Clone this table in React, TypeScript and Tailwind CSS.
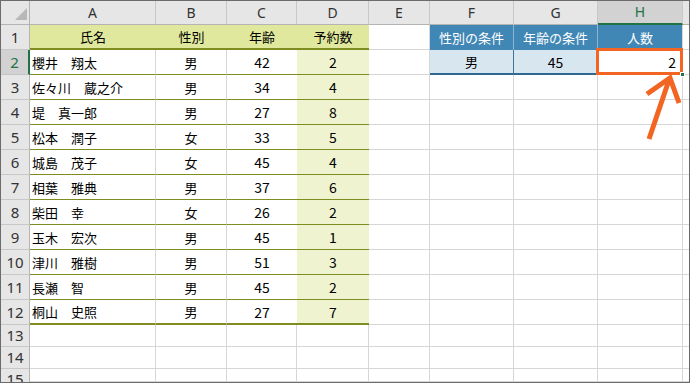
import React from "react";

type Row = { name: string; sex: string; age: string; n: string };

const data: Row[] = [
  { name: "櫻井　翔太", sex: "男", age: "42", n: "2" },
  { name: "佐々川　蔵之介", sex: "男", age: "34", n: "4" },
  { name: "堤　真一郎", sex: "男", age: "27", n: "8" },
  { name: "松本　潤子", sex: "女", age: "33", n: "5" },
  { name: "城島　茂子", sex: "女", age: "45", n: "4" },
  { name: "相葉　雅典", sex: "男", age: "37", n: "6" },
  { name: "柴田　幸", sex: "女", age: "26", n: "2" },
  { name: "玉木　宏次", sex: "男", age: "45", n: "1" },
  { name: "津川　雅樹", sex: "男", age: "51", n: "3" },
  { name: "長瀬　智", sex: "男", age: "45", n: "2" },
  { name: "桐山　史照", sex: "男", age: "27", n: "7" },
];

const letters = ["A", "B", "C", "D", "E", "F", "G"];

function RowHead({ label, selected, cut }: { label: string; selected?: boolean; cut?: boolean }) {
  if (selected) {
    return (
      <div className="flex items-center justify-center border-b border-r-2 border-b-[#c4c4c4] border-r-[#217346] bg-[#d2d2d2] font-['Noto_Sans','Liberation_Sans',sans-serif] text-[15px] text-[#217346]">
        {label}
      </div>
    );
  }
  if (cut) {
    return (
      <div className="flex items-start justify-center overflow-hidden border-r border-r-[#b4b4b4] bg-[#e6e6e6] pt-[3px] font-['Noto_Sans','Liberation_Sans',sans-serif] text-[15px] leading-[15px] text-[#333]">
        {label}
      </div>
    );
  }
  return (
    <div className="flex items-center justify-center border-b border-r border-b-[#c8c8c8] border-r-[#b4b4b4] bg-[#e6e6e6] font-['Noto_Sans','Liberation_Sans',sans-serif] text-[15px] text-[#333]">
      {label}
    </div>
  );
}

function Empty() {
  return <div className="border-b border-r border-[#d6d6d6] bg-white" />;
}

export default function App() {
  return (
    <div className="relative h-[383px] w-[690px] overflow-hidden border border-[#6b6b6b] bg-white font-['Noto_Sans_CJK_JP','Noto_Sans',sans-serif] text-[13px] leading-none text-black">
      <div className="grid h-full grid-cols-[29px_126px_71px_70px_72px_61px_84px_84px_85px_6px] grid-rows-[24px_repeat(12,25px)_22px_22px_13px]">
        {/* column header row */}
        <div className="relative border-b border-r border-b-[#b4b4b4] border-r-[#b4b4b4] bg-[#e6e6e6]">
          <svg className="absolute left-[14px] top-[7px]" width="12" height="12" viewBox="0 0 12 12">
            <polygon points="12,0 12,12 0,12" fill="#b8b8b8" />
          </svg>
        </div>
        {letters.map((l) => (
          <div
            key={l}
            className="flex items-center justify-center border-b border-r border-b-[#b4b4b4] border-r-[#c8c8c8] bg-[#e6e6e6] font-['Noto_Sans','Liberation_Sans',sans-serif] text-[14px] text-[#333]"
          >
            {l}
          </div>
        ))}
        <div className="flex items-center justify-center border-b-2 border-r border-b-[#217346] border-r-[#c8c8c8] bg-[#d2d2d2] font-['Noto_Sans','Liberation_Sans',sans-serif] text-[14px] text-[#217346]">
          H
        </div>
        <div className="border-b border-b-[#b4b4b4] bg-[#e6e6e6]" />

        {/* row 1 */}
        <RowHead label="1" />
        <div className="flex items-center justify-center border-b-2 border-[#7f8c1f] bg-[#dfe89c]">氏名</div>
        <div className="flex items-center justify-center border-b-2 border-[#7f8c1f] bg-[#dfe89c]">性別</div>
        <div className="flex items-center justify-center border-b-2 border-[#7f8c1f] bg-[#dfe89c]">年齢</div>
        <div className="flex items-center justify-center border-b-2 border-[#7f8c1f] bg-[#dfe89c]">予約数</div>
        <Empty />
        <div className="flex items-center justify-center border-r border-r-[#8db5d0] bg-[#4187b5] text-white">性別の条件</div>
        <div className="flex items-center justify-center border-r border-r-[#8db5d0] bg-[#4187b5] text-white">年齢の条件</div>
        <div className="flex items-center justify-center border-r border-r-[#d6d6d6] bg-[#4187b5] text-white">人数</div>
        <div className="border-b border-[#d6d6d6] bg-white" />

        {/* data rows */}
        {data.map((r, i) => {
          const last = i === data.length - 1;
          return (
            <React.Fragment key={i}>
              <RowHead label={String(i + 2)} selected={i === 0} />
              <div
                className={
                  last
                    ? "flex items-center border-b-2 border-r border-b-[#7f8c1f] border-r-[#d6d6d6] pl-[2px] whitespace-nowrap"
                    : "flex items-center border-b border-r border-b-[#7f8c1f] border-r-[#d6d6d6] pl-[2px] whitespace-nowrap"
                }
              >
                {r.name}
              </div>
              <div
                className={
                  last
                    ? "flex items-center justify-center border-b-2 border-r border-b-[#7f8c1f] border-r-[#d6d6d6]"
                    : "flex items-center justify-center border-b border-r border-b-[#7f8c1f] border-r-[#d6d6d6]"
                }
              >
                {r.sex}
              </div>
              <div
                className={
                  last
                    ? "flex items-center justify-center border-b-2 border-b-[#7f8c1f] text-[14px]"
                    : "flex items-center justify-center border-b border-b-[#7f8c1f] text-[14px]"
                }
              >
                {r.age}
              </div>
              <div
                className={
                  last
                    ? "flex items-center justify-center border-b-2 border-b-[#7f8c1f] bg-[#eff3d0] text-[14px]"
                    : "flex items-center justify-center border-b border-b-[#7f8c1f] bg-[#eff3d0] text-[14px]"
                }
              >
                {r.n}
              </div>
              <Empty />
              {i === 0 ? (
                <>
                  <div className="flex items-center justify-center border-b-2 border-r border-b-[#2f6890] border-r-[#3f7598] bg-[#d8e6f0]">男</div>
                  <div className="flex items-center justify-center border-b-2 border-r border-b-[#2f6890] border-r-[#3f7598] bg-[#d8e6f0] text-[14px]">45</div>
                  <div className="relative flex items-center justify-end border-b border-r border-[#d6d6d6] bg-white pr-[6px] text-[14px]">
                    2
                    <div className="pointer-events-none absolute -left-[2px] -top-[2px] bottom-[-1px] right-[-1px] border-[3px] border-[#f26522]" />
                    <div className="absolute -bottom-[3px] -right-[3px] h-[5px] w-[5px] border border-white bg-[#217346]" />
                  </div>
                </>
              ) : (
                <>
                  <Empty />
                  <Empty />
                  <Empty />
                </>
              )}
              <div className="border-b border-[#d6d6d6] bg-white" />
            </React.Fragment>
          );
        })}

        {/* rows 13-15 */}
        {["13", "14", "15"].map((l) => (
          <React.Fragment key={l}>
            <RowHead label={l} cut={l === "15"} />
            <Empty />
            <Empty />
            <Empty />
            <Empty />
            <Empty />
            <Empty />
            <Empty />
            <Empty />
            <div className="border-b border-[#d6d6d6] bg-white" />
          </React.Fragment>
        ))}
      </div>

      <svg className="pointer-events-none absolute -left-px -top-px" width="690" height="383" viewBox="0 0 690 383">
        <line x1="649" y1="139" x2="669" y2="80" stroke="#f26522" strokeWidth="5" />
        <polyline points="647,94 670,78 679,103" fill="none" stroke="#f26522" strokeWidth="5" strokeLinejoin="miter" />
      </svg>
    </div>
  );
}
